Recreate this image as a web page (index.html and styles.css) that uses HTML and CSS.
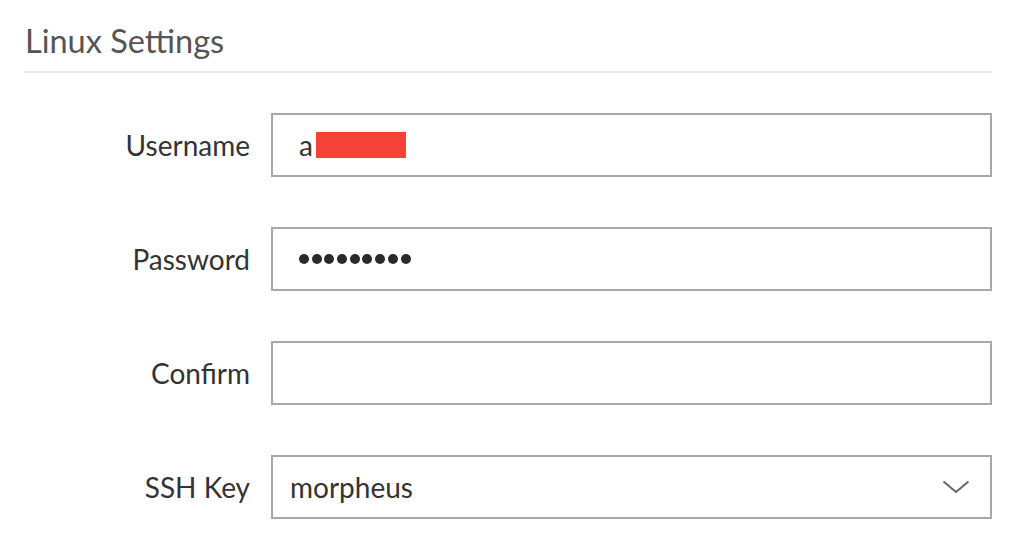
FILE: index.html
```html
<!DOCTYPE html>
<html>
<head>
<meta charset="utf-8">
<link rel="stylesheet" href="styles.css">
</head>
<body>
<div class="panel">
  <h2 class="title">Linux Settings</h2>
  <div class="form">
    <label class="label">Username</label>
    <div class="field"><span class="value">a<span class="redact"></span></span></div>
    <label class="label">Password</label>
    <div class="field"><span class="dots"><i></i><i></i><i></i><i></i><i></i><i></i><i></i><i></i><i></i></span></div>
    <label class="label">Confirm</label>
    <div class="field"></div>
    <label class="label">SSH Key</label>
    <div class="field select"><span class="value sel">morpheus</span>
      <svg class="chev" width="28" height="14" viewBox="0 0 28 14"><path d="M1.5 1.5 L14 12 L26.5 1.5" fill="none" stroke="#666" stroke-width="2"/></svg>
    </div>
  </div>
</div>
</body>
</html>
```
FILE: styles.css
```css
html, body { margin: 0; padding: 0; background: #fff; }
body { font-family: Lato, "Noto Sans", sans-serif; color: #333; }
.panel { width: 968px; margin-left: 24px; }
.title {
  margin: 0;
  padding: 22px 0 11px 1px;
  font-size: 32.5px;
  line-height: 38px;
  font-weight: 400;
  color: #555;
  border-bottom: 2px solid #e6e6e6;
}
.form {
  display: grid;
  grid-template-columns: 226px 721px;
  column-gap: 21px;
  row-gap: 50px;
  margin-top: 40px;
}
.label {
  text-align: right;
  font-size: 28px;
  align-self: center;
  color: #333;
}
.field {
  height: 64px;
  box-sizing: border-box;
  border: 2px solid #a8a8a8;
  display: flex;
  align-items: center;
  padding-left: 26px;
}
.value { font-size: 28px; color: #333; display: flex; align-items: center; }
.redact { display: inline-block; width: 90px; height: 26px; background: #f44336; margin-left: 3px; }
.dots { display: flex; gap: 2.7px; }
.dots i { width: 10px; height: 10px; border-radius: 50%; background: #2a2a2a; }
.select { padding-left: 17px; padding-right: 20px; justify-content: space-between; }
.chev { display: block; }
```
